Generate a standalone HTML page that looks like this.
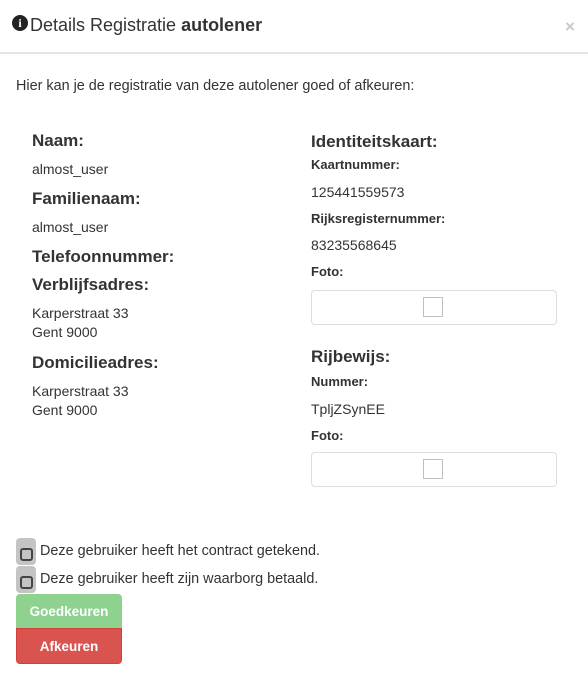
<!DOCTYPE html>
<html><head><meta charset="utf-8"><style>
body{margin:0;width:588px;height:694px;background:#fff;font-family:"Liberation Sans",Arial,sans-serif;color:#333;position:relative;overflow:hidden}
.a{position:absolute;white-space:nowrap;line-height:1}
.h{font-size:17px;font-weight:bold;color:#333}
.t{font-size:14px}
.l{font-size:13px;font-weight:bold}
.box{position:absolute;left:311px;width:244px;height:33px;border:1.5px solid #ddd;border-radius:4px}
.box i{position:absolute;left:111px;top:6px;width:18px;height:18px;border:1.5px solid #c0c0c0}
.cb{position:absolute;left:16px;width:20px;height:27px;background:#c4c4c4;border-radius:4px}
.cb i{position:absolute;left:4px;top:10px;width:9px;height:9px;border:2px solid #444;border-radius:3px}
</style></head><body>
<div class="a" style="left:12px;top:15px;width:16px;height:16px;border-radius:50%;background:#222;color:#fff;font:bold 12px 'Liberation Serif',serif;text-align:center;line-height:16px">i</div>
<div class="a" style="left:30px;top:16px;font-size:18px;color:#333">Details Registratie <b>autolener</b></div>
<div class="a" style="left:565px;top:18px;font-size:17px;color:#c8c8c8;font-weight:bold">×</div>
<div style="position:absolute;left:0;top:52px;width:588px;height:1.5px;background:#e5e5e5"></div>
<div class="a" style="left:16px;top:79px;font-size:14.4px">Hier kan je de registratie van deze autolener goed of afkeuren:</div>

<div class="a h" style="left:32px;top:132px">Naam:</div>
<div class="a t" style="left:32px;top:162px">almost_user</div>
<div class="a h" style="left:32px;top:190px">Familienaam:</div>
<div class="a t" style="left:32px;top:220px">almost_user</div>
<div class="a h" style="left:32px;top:248px">Telefoonnummer:</div>
<div class="a h" style="left:32px;top:276px">Verblijfsadres:</div>
<div class="a t" style="left:32px;top:306px">Karperstraat 33</div>
<div class="a t" style="left:32px;top:325px">Gent 9000</div>
<div class="a h" style="left:32px;top:354px">Domicilieadres:</div>
<div class="a t" style="left:32px;top:384px">Karperstraat 33</div>
<div class="a t" style="left:32px;top:403px">Gent 9000</div>

<div class="a h" style="left:311px;top:133px">Identiteitskaart:</div>
<div class="a l" style="left:311px;top:158px">Kaartnummer:</div>
<div class="a t" style="left:311px;top:185px">125441559573</div>
<div class="a l" style="left:311px;top:212px">Rijksregisternummer:</div>
<div class="a t" style="left:311px;top:238px">83235568645</div>
<div class="a l" style="left:311px;top:265px">Foto:</div>
<div class="box" style="top:290px"><i></i></div>
<div class="a h" style="left:311px;top:348px">Rijbewijs:</div>
<div class="a l" style="left:311px;top:375px">Nummer:</div>
<div class="a t" style="left:311px;top:402px">TpljZSynEE</div>
<div class="a l" style="left:311px;top:429px">Foto:</div>
<div class="box" style="top:452px"><i></i></div>

<div class="cb" style="top:538px"><i></i></div>
<div class="a" style="left:40px;top:544px;font-size:14.4px">Deze gebruiker heeft het contract getekend.</div>
<div class="cb" style="top:566px"><i></i></div>
<div class="a" style="left:40px;top:572px;font-size:14.4px">Deze gebruiker heeft zijn waarborg betaald.</div>
<div style="position:absolute;left:16px;top:594px;width:106px;height:34px;background:#8fd18f;border-radius:4px 4px 0 0;color:#fff;font-size:13.5px;font-weight:bold;text-align:center;line-height:36px">Goedkeuren</div>
<div style="position:absolute;left:16px;top:628px;width:104px;height:34px;background:#d9534f;border:1px solid #d43f3a;border-radius:0 0 4px 4px;color:#fff;font-size:13.5px;font-weight:bold;text-align:center;line-height:36px">Afkeuren</div>
</body></html>
